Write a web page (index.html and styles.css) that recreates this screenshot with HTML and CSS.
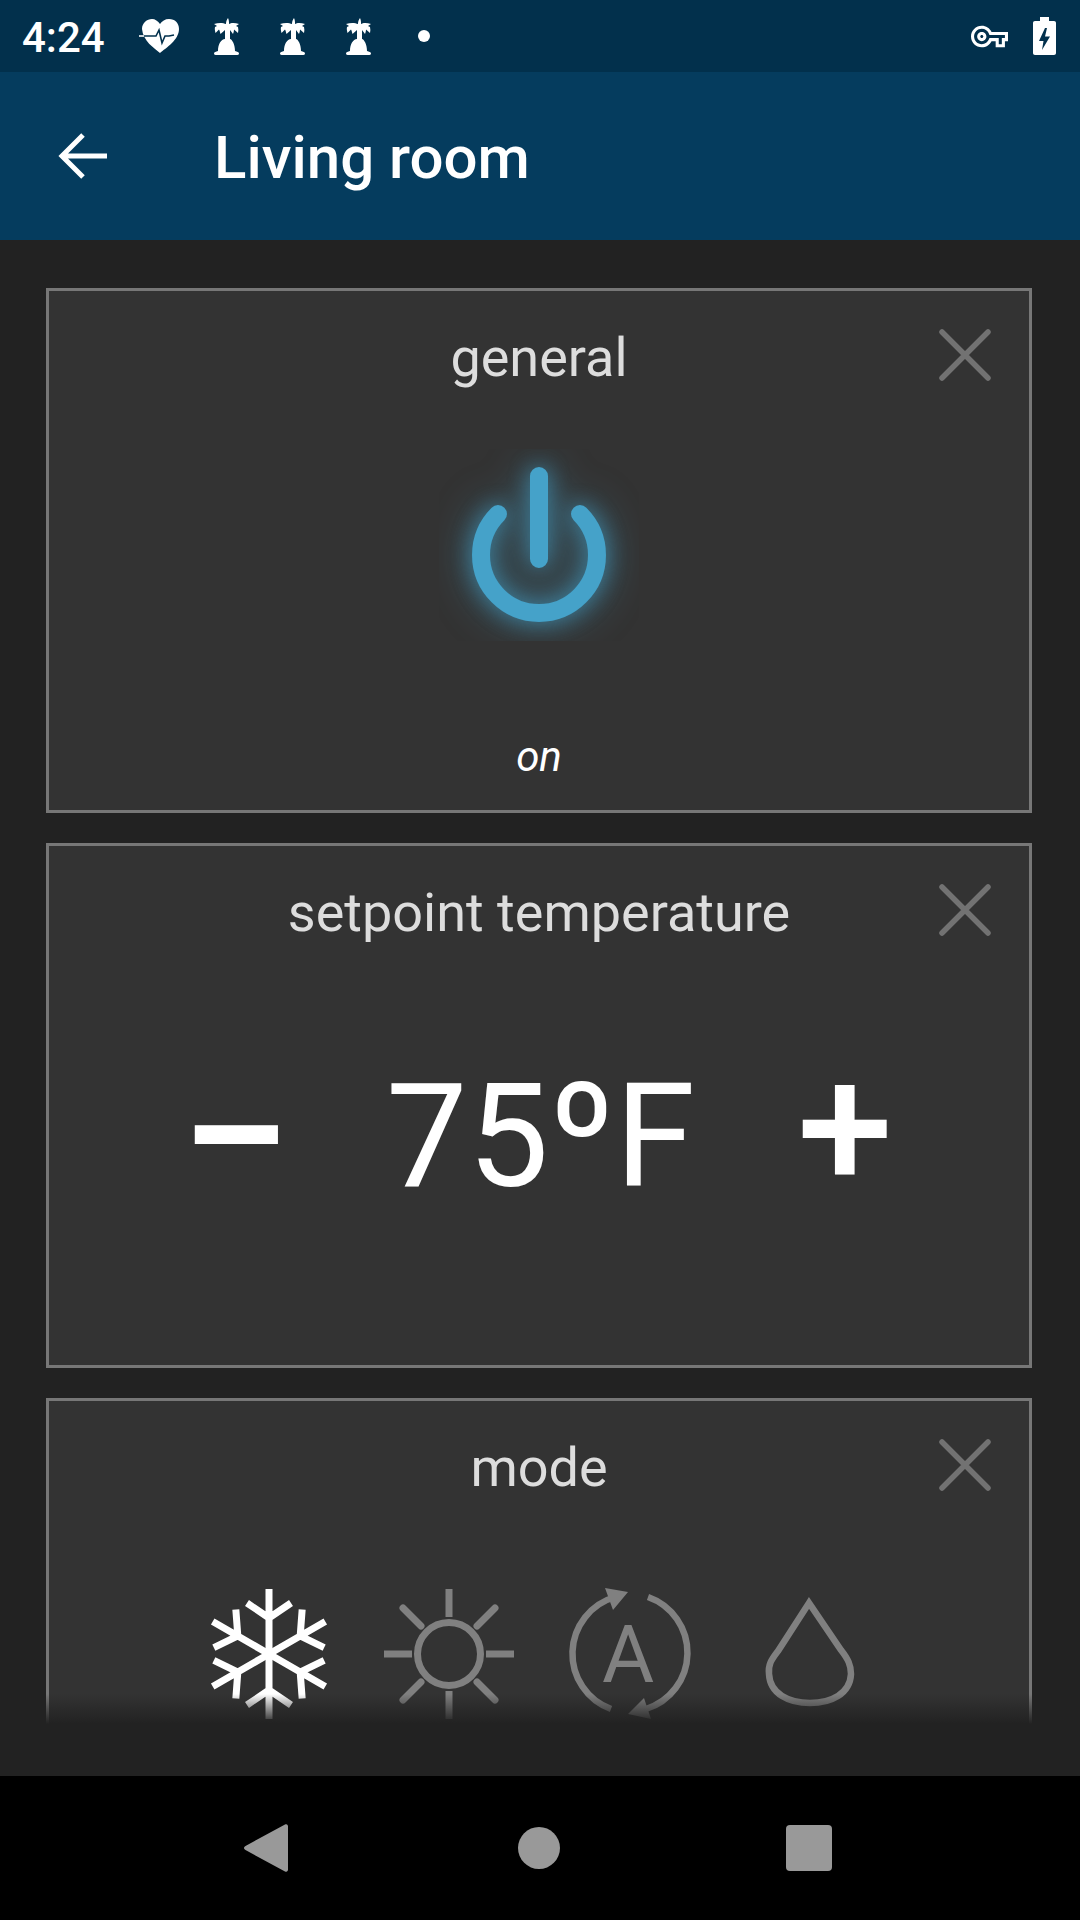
FILE: index.html
```html
<!DOCTYPE html>
<html lang="en">
<head>
    <meta charset="UTF-8">
    <meta name="viewport" content="width=device-width, initial-scale=1.0">
    <title>Living room</title>
    <link rel="stylesheet" href="styles.css">
</head>
<body>
    <div class="status-bar">
        <span class="clock">4:24</span>
        <span class="status-icon">
            <svg width="42" height="36" viewBox="0 0 42 36">
                <path fill="#fff" d="M21 35 C15 30 4 23 3 11 C3 5 8 1 13 1 C16 1 19 3 21 6 C23 3 26 1 30 1 C36 1 40 5 40 11 C40 22 27 30 21 35Z"/>
                <path fill="none" stroke="#02304c" stroke-width="1.6" d="M4 18 H17 L20 12 L23 25 L26 18 H30 L35 17"/>
                <path fill="none" stroke="#fff" stroke-width="1.6" d="M0 18 H5"/>
            </svg>
        </span>
        <span class="status-icon">
            <svg class="palm" width="25" height="37" viewBox="0 0 25 37"><use href="#palm"/></svg>
        </span>
        <span class="status-icon">
            <svg class="palm" width="25" height="37" viewBox="0 0 25 37"><use href="#palm"/></svg>
        </span>
        <span class="status-icon">
            <svg class="palm" width="25" height="37" viewBox="0 0 25 37"><use href="#palm"/></svg>
        </span>
        <span class="status-icon"><span class="status-dot"></span></span>
        <span class="status-right">
            <svg width="37" height="37" viewBox="0 0 24 24">
                <path fill="#fff" d="M22 19h-6v-4h-2.68c-1.14 2.42-3.6 4-6.32 4-3.86 0-7-3.14-7-7s3.14-7 7-7c2.72 0 5.17 1.58 6.32 4H24v6h-2v4zm-4-2h2v-4h2v-2H11.94l-.23-.67C11.01 8.34 9.11 7 7 7c-2.76 0-5 2.24-5 5s2.24 5 5 5c2.11 0 4.01-1.34 4.71-3.33l.23-.67H18v4zM7 15c-1.65 0-3-1.35-3-3s1.35-3 3-3 3 1.35 3 3-1.35 3-3 3zm0-4c-.55 0-1 .45-1 1s.45 1 1 1 1-.45 1-1-.45-1-1-1z"/>
            </svg>
            <svg width="23" height="38" viewBox="0 0 23 38">
                <path fill="#fff" fill-rule="evenodd" d="M7 0h9v4h5c1.2 0 2 .8 2 2v30c0 1.200-.8 2-2 2H2c-1.200 0-2-.8-2-2V6c0-1.200.8-2 2-2h5zM12 11 L6 24h4.500L9 33 17 19.500h-5L14 11z"/>
            </svg>
        </span>
    </div>

    <svg class="defs" width="0" height="0">
        <defs>
            <g id="palm" fill="#fff">
                <path d="M14 0 C12.500 2 12 4 12 6 C9 4.500 4 4.500 0 6 L3 8 L1 9 C0.500 11 1 13 1.500 15 L5 11.500 C6 13 6 15 6.500 16 L11 12 V21 C7 21.500 4 26 4 33 C2 33.500 0 34 0 35.500 C0 37 1 37 3 37 H22 C24 37 25 37 25 35.500 C25 34 23 33.500 21 33 C21 26 18 21.500 16 21 V12 L19 16 C19.500 15 20 13 20 11.500 L24 15 C24.500 13 24.500 11 24 9 L22 8 L25 6 C21 4.500 17 4.500 15 6 C15 4 15 2 14 0Z"/>
            </g>
        </defs>
    </svg>

    <header class="app-bar">
        <svg class="back-arrow" width="50" height="48" viewBox="0 0 50 48">
            <path fill="none" stroke="#fff" stroke-width="5" d="M49 24 H5 M25 3 L4 24 L25 45"/>
        </svg>
        <h1 class="app-title">Living room</h1>
    </header>

    <main class="content">
        <section class="card">
            <h2 class="card-title">general</h2>
            <svg class="card-close" width="52" height="52" viewBox="0 0 52 52"><use href="#close"/></svg>
            <div class="power-wrap">
                <svg class="power-icon" width="200" height="192" viewBox="439 448 200 192">
                    <g class="power-glow">
                        <path fill="none" stroke="#45a2c9" stroke-width="18" stroke-linecap="round" d="M498 513 A58 58 0 1 0 580 513 M539 475 V558"/>
                    </g>
                </svg>
            </div>
            <p class="card-state">on</p>
        </section>

        <section class="card">
            <h2 class="card-title">setpoint temperature</h2>
            <svg class="card-close" width="52" height="52" viewBox="0 0 52 52">
                <defs>
                    <path id="close" fill="none" stroke="#727272" stroke-width="5.500" stroke-linecap="round" d="M3 3 L49 49 M49 3 L3 49"/>
                </defs>
                <use href="#close"/>
            </svg>
            <div class="temp-row">
                <span class="temp-btn temp-minus">−</span>
                <span class="temp-value">75ºF</span>
                <span class="temp-btn temp-plus">+</span>
            </div>
        </section>

        <section class="card">
            <h2 class="card-title">mode</h2>
            <svg class="card-close" width="52" height="52" viewBox="0 0 52 52"><use href="#close"/></svg>
            <div class="mode-row">
                <svg class="mode-icon" width="180" height="140" viewBox="-90 -71 180 140">
                    <g fill="none" stroke="#fff" stroke-width="7">
                        <g id="flake-arm"><path d="M0 0 V-65 M-22 -51 L0 -36 L22 -51"/></g>
                        <use href="#flake-arm" transform="rotate(60)"/>
                        <use href="#flake-arm" transform="rotate(120)"/>
                        <use href="#flake-arm" transform="rotate(180)"/>
                        <use href="#flake-arm" transform="rotate(240)"/>
                        <use href="#flake-arm" transform="rotate(300)"/>
                    </g>
                </svg>
                <svg class="mode-icon" width="180" height="140" viewBox="-90 -71 180 140">
                    <g fill="none" stroke="#808080" stroke-width="7">
                        <circle r="31.500"/>
                        <path d="M0 -65 V-37 M0 65 V37 M-65 0 H-37 M65 0 H37"/>
                        <path stroke-linecap="round" d="M-46 -46 L-28 -28 M46 -46 L28 -28 M-46 46 L-28 28 M46 46 L28 28"/>
                    </g>
                </svg>
                <svg class="mode-icon" width="180" height="140" viewBox="-90 -70 180 140">
                    <g fill="none" stroke="#808080" stroke-width="6.500">
                        <path d="M19 -56 A59 59 0 0 1 17 56"/>
                        <path d="M-18 56 A59 59 0 0 1 -14 -56"/>
                    </g>
                    <path fill="#808080" d="M-24 -65 L-1 -61 L-16 -43Z M15 45 L-1 61 L22 66Z"/>
                    <text class="mode-letter" x="-1" y="29" text-anchor="middle">A</text>
                </svg>
                <svg class="mode-icon" width="180" height="140" viewBox="-90 -70 180 140">
                    <path fill="none" stroke="#808080" stroke-width="6.500" d="M0 -50 L-31 -2 C-38 7 -41 12 -40 21 C-39 41 -20 50 1 50 C22 50 41 41 42 21 C42 12 39 6 32 -3Z"/>
                </svg>
            </div>
        </section>
        <div class="content-fade"></div>
    </main>

    <nav class="nav-bar">
        <svg width="44" height="48" viewBox="0 0 44 48">
            <path fill="#999" d="M41 0.500 C43 -0.500 44 1 44 2.500 V45.500 C44 47 43 48.500 41 47.500 L1.500 26 C-0.500 25 -0.500 23 1.500 22Z"/>
        </svg>
        <span class="nav-circle"></span>
        <span class="nav-square"></span>
    </nav>
</body>
</html>
```

FILE: styles.css
```css
html, body {
    margin: 0;
    padding: 0;
}

body {
    width: 1080px;
    height: 1920px;
    display: flex;
    flex-direction: column;
    background-color: #222;
    font-family: Roboto, sans-serif;
    overflow: hidden;
}

.defs {
    position: absolute;
}

.status-bar {
    height: 72px;
    flex: none;
    display: flex;
    align-items: center;
    background-color: #02304c;
    color: white;
    padding-left: 22px;
    padding-right: 24px;
}

.clock {
    width: 105px;
    padding-top: 3px;
    font-size: 42px;
    font-weight: 500;
}

.status-icon {
    width: 66px;
    height: 72px;
    display: flex;
    align-items: center;
    justify-content: center;
}

.status-dot {
    width: 12px;
    height: 12px;
    border-radius: 50%;
    background-color: white;
}

.status-right {
    margin-left: auto;
    display: flex;
    align-items: center;
    gap: 25px;
}

.app-bar {
    height: 168px;
    flex: none;
    display: flex;
    align-items: center;
    background-color: #053c5e;
    padding-left: 58px;
}

.back-arrow {
    margin-right: 106px;
}

.app-title {
    margin: 0;
    padding-top: 3px;
    color: white;
    font-size: 60px;
    font-weight: 500;
}

.content {
    position: relative;
    flex: 1;
    padding: 48px 48px 0 46px;
    display: flex;
    flex-direction: column;
    gap: 30px;
    overflow: hidden;
}

.card {
    position: relative;
    flex: none;
    height: 525px;
    box-sizing: border-box;
    border: 3px solid #777;
    background-color: #333;
    text-align: center;
}

.card-title {
    margin: 37px 0 0;
    color: #ddd;
    font-size: 54px;
    font-weight: 400;
    line-height: 60px;
}

.card-close {
    position: absolute;
    top: 38px;
    right: 38px;
}

.power-wrap {
    height: 192px;
    margin-top: 61px;
}

.power-icon {
    display: block;
    margin: 0 auto;
}

.power-glow {
    filter: drop-shadow(0 0 10px rgba(66, 160, 200, 0.6)) drop-shadow(0 0 18px rgba(66, 160, 200, 0.55));
}

.card-state {
    margin: 91px 0 0;
    color: white;
    font-size: 42px;
    font-style: italic;
}

.temp-row {
    display: grid;
    grid-template-columns: 160px 1fr 160px;
    align-items: center;
    justify-items: center;
    padding: 0 104px 0 107px;
    margin-top: 95px;
}

.temp-value {
    color: white;
    font-size: 145px;
    line-height: 180px;
}

.temp-btn {
    color: white;
    font-weight: 500;
    line-height: 180px;
}

.temp-minus {
    padding-top: 2px;
    font-size: 200px;
}

.temp-plus {
    padding-bottom: 16px;
    font-size: 172px;
}

.mode-row {
    display: flex;
    justify-content: center;
    margin-top: 85px;
}

.mode-icon {
    flex: none;
}

.mode-letter {
    fill: #808080;
    font-family: Roboto, sans-serif;
    font-size: 80px;
}

.content-fade {
    position: absolute;
    left: 0;
    right: 0;
    top: 1454px;
    bottom: 0;
    background: linear-gradient(to bottom, rgba(34, 34, 34, 0), #222 30px);
}

.nav-bar {
    height: 144px;
    flex: none;
    position: relative;
    display: flex;
    align-items: center;
    justify-content: space-between;
    background-color: black;
    padding: 0 248px 0 244px;
}

.nav-circle {
    width: 42px;
    height: 42px;
    margin-left: 4px;
    border-radius: 50%;
    background-color: #999;
}

.nav-square {
    width: 46px;
    height: 46px;
    border-radius: 4px;
    background-color: #999;
}
```
